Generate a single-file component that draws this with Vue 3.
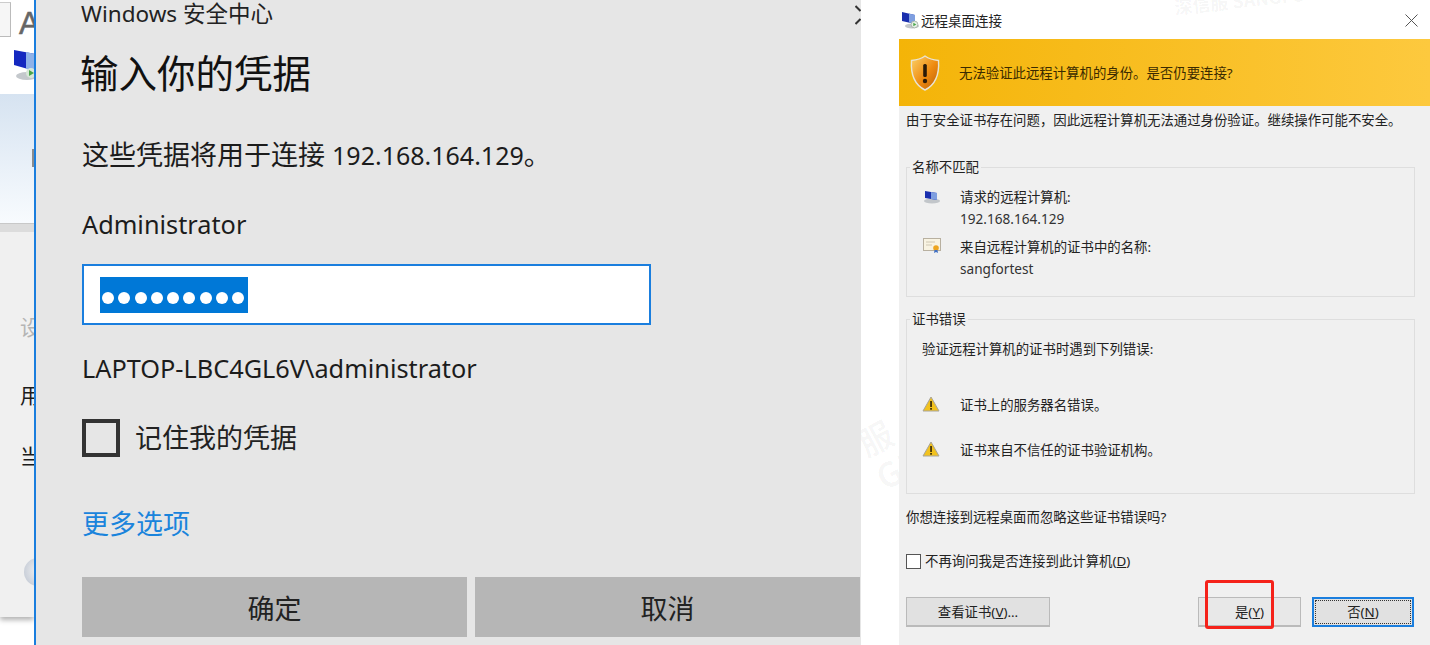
<script setup>
const mismatch = [
  { icon: 'pc', label: '请求的远程计算机:', value: '192.168.164.129' },
  { icon: 'cert', label: '来自远程计算机的证书中的名称:', value: 'sangfortest' }
]
const errors = ['证书上的服务器名错误。', '证书来自不信任的证书验证机构。']
</script>

<template>
  <div class="page">
    <aside class="strip">
      <div class="strip-tabs"><span class="tab"></span><span class="big-a">A</span></div>
      <div class="strip-head">
        <svg class="pc-big" width="26" height="34" viewBox="0 0 26 34">
          <ellipse cx="15" cy="27" rx="11" ry="4" fill="#c4c8cc" />
          <path d="M2 1l21 4v17L2 16z" fill="#1428c0" />
          <path d="M14 3l9 2v17l-9-2z" fill="#8fb2e8" />
          <circle cx="19" cy="24" r="5" fill="#d8e8d8" />
          <path d="M17 21l5 3-5 3z" fill="#4aa54a" />
        </svg>
      </div>
      <div class="strip-blue"><span class="tick"></span></div>
      <div class="strip-band"></div>
      <div class="strip-body">
        <span class="clip-t faint">设</span>
        <span class="clip-t second">用</span>
        <span class="clip-t">当</span>
        <span class="orb"></span>
      </div>
    </aside>

    <main class="cred">
      <div class="cred-top">
        <span class="cred-app">Windows 安全中心</span>
        <svg class="cred-close" width="6" height="20" viewBox="0 0 6 20"><path d="M.5 1l5 5M5.500 14l-5 5" stroke="#333" stroke-width="2" fill="none" /></svg>
      </div>
      <h1 class="cred-title">输入你的凭据</h1>
      <p class="cred-desc">这些凭据将用于连接 <span class="latin">192.168.164.129</span>。</p>
      <p class="cred-user">Administrator</p>
      <div class="cred-input"><span class="selected"><i v-for="n in 9" :key="n" class="dot"></i></span></div>
      <p class="cred-domain">LAPTOP-LBC4GL6V\administrator</p>
      <div class="cred-check"><span class="box"></span><span>记住我的凭据</span></div>
      <a class="cred-more">更多选项</a>
      <div class="cred-btns">
        <button class="cred-btn">确定</button>
        <button class="cred-btn">取消</button>
      </div>
    </main>

    <div class="spacer"><span class="wm">服<br />GFO</span></div>

    <section class="rdp">
      <header class="rdp-title">
        <span class="wm-top">深信服 SANGFOR</span>
        <svg width="18" height="18" viewBox="0 0 18 18">
          <ellipse cx="11" cy="15" rx="7" ry="2.500" fill="#c2c6ca" />
          <path d="M1 1l13 3v9L1 10z" fill="#1a2fae" />
          <path d="M8 2.600l6 1.400v9l-6-1.400z" fill="#7f9fe0" />
          <circle cx="13.500" cy="13.500" r="3.400" fill="#e6efe6" stroke="#8c9a8c" stroke-width=".6" />
          <path d="M12.300 11.800l3 1.700-3 1.700z" fill="#4aa54a" />
        </svg>
        <span class="rdp-name">远程桌面连接</span>
        <svg class="x" width="13" height="13" viewBox="0 0 13 13"><path d="M.5.5l12 12M12.500.5l-12 12" stroke="#555" fill="none" /></svg>
      </header>
      <div class="banner">
        <svg width="32" height="36" viewBox="0 0 30 36">
          <defs>
            <linearGradient id="sh" x1="0" y1="0" x2="1" y2="1">
              <stop offset="0" stop-color="#fcd36a" />
              <stop offset=".55" stop-color="#ee8a10" />
              <stop offset="1" stop-color="#b85e08" />
            </linearGradient>
          </defs>
          <path d="M15 1c3.500 2.500 8 4 13.500 4.500C29.500 20 25 30 15 35 5 30 .5 20 1.500 5.500 7 5 11.500 3.500 15 1z" fill="url(#sh)" stroke="#e9e4d4" stroke-width="1.400" />
          <rect x="13.200" y="9" width="3.600" height="13" rx="1.500" fill="#2a1a08" />
          <circle cx="15" cy="26" r="2.200" fill="#2a1a08" />
        </svg>
        <span class="banner-text">无法验证此远程计算机的身份。是否仍要连接?</span>
      </div>
      <div class="rdp-body">
        <p class="intro">由于安全证书存在问题&#xFF0C;因此远程计算机无法通过身份验证。继续操作可能不安全。</p>

        <fieldset class="group g1">
          <legend>名称不匹配</legend>
          <div v-for="m in mismatch" :key="m.label" class="row">
            <span class="row-ic">
              <svg v-if="m.icon === 'pc'" class="ic-pc" width="18" height="14" viewBox="0 0 18 14">
                <ellipse cx="9" cy="11" rx="8" ry="2.500" fill="#c2c6ca" />
                <path d="M2 1l12 2v7L2 8z" fill="#1a2fae" />
                <path d="M8 2l6 1v7l-6-1z" fill="#7f9fe0" />
              </svg>
              <svg v-else width="18" height="15" viewBox="0 0 18 15">
                <rect x=".5" y=".5" width="17" height="12" fill="#f8f3e2" stroke="#b8b0a0" />
                <path d="M3 4h9M3 7h6" stroke="#d0c8b4" />
                <circle cx="13" cy="10" r="2.800" fill="#eda520" />
                <path d="M11.500 12l-.5 3 2-1 2 1-.5-3z" fill="#3f6fc4" />
              </svg>
            </span>
            <div class="row-text"><div>{{ m.label }}</div><div class="val">{{ m.value }}</div></div>
          </div>
        </fieldset>

        <fieldset class="group g2">
          <legend>证书错误</legend>
          <p class="g2-lead">验证远程计算机的证书时遇到下列错误:</p>
          <div v-for="e in errors" :key="e" class="err">
            <svg width="18" height="16" viewBox="0 0 18 16">
              <path d="M9 1l8 14H1z" fill="#f2c21e" stroke="#a8a498" stroke-linejoin="round" />
              <rect x="8.200" y="5" width="1.700" height="6" fill="#3a2c08" />
              <rect x="8.200" y="12" width="1.700" height="1.700" fill="#3a2c08" />
            </svg>
            <span>{{ e }}</span>
          </div>
        </fieldset>

        <p class="ask">你想连接到远程桌面而忽略这些证书错误吗?</p>
        <label class="dont"><span class="dont-box"></span><span>不再询问我是否连接到此计算机(<u>D</u>)</span></label>

        <div class="actions">
          <button class="wbtn view">查看证书(<u>V</u>)...</button>
          <span class="grow"></span>
          <button class="wbtn yes">是(<u>Y</u>)<span class="redbox"></span></button>
          <button class="wbtn no"><span class="focus"></span>否(<u>N</u>)</button>
        </div>
      </div>
    </section>
  </div>
</template>

<style>
html, body { margin: 0; background: #fff; }
</style>

<style scoped>
.page {
  display: flex;
  width: 1430px;
  height: 645px;
  overflow: hidden;
  background: #fff;
  font-family: "Noto Sans", "Noto Sans CJK SC", sans-serif;
  color: #1c1c1c;
}
.strip { width: 34px; flex: none; display: flex; flex-direction: column; overflow: hidden; height: 617px; box-shadow: 0 3px 5px rgba(0,0,0,.3); background: #f0f0f0; }
.strip-tabs { height: 37px; flex: none; background: #fff; overflow: hidden; display: flex; }
.tab { width: 11px; height: 35px; flex: none; border: 1px solid #bbb; border-left: 0; border-top-color: #ccc; background: #f6f6f6; box-sizing: border-box; margin-top: 2px; }
.big-a { font: 400 31px/48px "Liberation Sans", sans-serif; color: #666; margin-left: 8px; -webkit-text-stroke: .5px #666; }
.strip-head { height: 57px; flex: none; background: #fff; overflow: hidden; padding: 12px 0 0 12px; box-sizing: border-box; }
.strip-blue { height: 129px; flex: none; position: relative; overflow: hidden; background: linear-gradient(180deg, #d6e3f1, #f8fbfe); }
.tick { position: absolute; right: 0; top: 55px; width: 2px; height: 18px; background: #8c8c8c; }
.strip-band { height: 9px; flex: none; background: #dcdcdc; border-top: 1px solid #c8c8c8; box-sizing: border-box; }
.strip-body { flex: 1; display: flex; flex-direction: column; overflow: hidden; padding-top: 82px; }
.clip-t { font-size: 21px; line-height: 26px; height: 26px; margin-left: 20px; margin-bottom: 35px; white-space: nowrap; flex: none; }
.faint { color: #b4b4b4; margin-bottom: 42px; }
.second { margin-bottom: 35px; }
.orb { width: 28px; height: 28px; flex: none; border-radius: 50%; margin: 54px 0 0 24px; background: radial-gradient(circle at 55% 45%, #f4f4f4, #c8ced8 75%, #a8b6cc); }
.pc-big { display: block; }

.cred { width: 827px; flex: none; box-sizing: border-box; border-left: 2px solid #1a7ede; background: #e6e6e6; padding: 0 0 0 46px; height: 645px; overflow: hidden; }
.cred-top { display: flex; justify-content: space-between; align-items: flex-start; height: 23px; font-size: 22.500px; line-height: 28px; color: #222; }
.cred-app { white-space: nowrap; margin-left: -1px; }
.cred-close { display: block; margin-top: 5px; flex: none; }
.cred-title { margin: 21px 0 0 -2px; font-size: 38.500px; line-height: 58px; font-weight: 400; color: #111; white-space: nowrap; }
.cred-desc { margin: 34px 0 0; font-size: 27px; line-height: 38px; white-space: nowrap; }
.latin { font-size: 25px; }
.cred-user { margin: 31px 0 0; font-size: 25.300px; line-height: 38px; white-space: nowrap; }
.cred-input { margin: 21px 0 0; width: 569px; height: 61px; box-sizing: border-box; border: 2px solid #1a7ede; background: #fff; padding: 11px 0 0 16px; }
.selected { display: flex; width: 148px; height: 36px; background: #0078d7; box-sizing: border-box; padding: 15px 0 0 2px; gap: 4.300px; }
.dot { width: 12px; height: 12px; border-radius: 50%; background: #fff; }
.cred-domain { margin: 24px 0 0; font-size: 25.300px; line-height: 38px; white-space: nowrap; }
.cred-check { margin: 32px 0 0; display: flex; align-items: center; gap: 15px; font-size: 27px; line-height: 38px; color: #222; }
.box { width: 38px; height: 38px; box-sizing: border-box; border: 4px solid #333; }
.cred-more { display: block; margin: 48px 0 0; font-size: 27px; line-height: 38px; color: #1a84dc; }
.cred-btns { display: flex; gap: 8px; margin-top: 34px; }
.cred-btn { width: 385px; height: 60px; flex: none; border: 0; background: #b6b6b6; font: 400 27px/64px "Noto Sans", "Noto Sans CJK SC", sans-serif; color: #222; padding: 0; }

.spacer { width: 38px; flex: none; position: relative; overflow: hidden; }
.wm { position: absolute; left: 4px; top: 408px; color: rgba(0,0,0,.03); font: 700 34px/38px "Noto Sans CJK SC", sans-serif; transform: rotate(-28deg); white-space: nowrap; }

.rdp { width: 531px; flex: none; display: flex; flex-direction: column; background: #f0f0f0; font-size: 13.400px; color: #222; }
.rdp-title { position: relative; overflow: hidden; height: 39px; flex: none; background: #fff; display: flex; align-items: center; box-sizing: border-box; padding: 1px 12px 0 2px; gap: 2px; }
.rdp-name { flex: 1; font-size: 13.500px; }
.wm-top { position: absolute; left: 275px; top: -12px; color: rgba(0,0,0,.05); font: 700 18px/22px "Noto Sans CJK SC", sans-serif; transform: rotate(-6deg); white-space: nowrap; }
.x { display: block; }
.banner { height: 67px; flex: none; background: linear-gradient(90deg, #f4b408, #fdc93e); display: flex; align-items: center; box-sizing: border-box; padding: 0 0 0 10px; gap: 18px; color: #3a2a00; }
.banner-text { margin-bottom: 2px; }
.rdp-body { flex: 1; padding: 0 15px 0 7px; }
.intro { margin: 4px 0 0; line-height: 20px; white-space: nowrap; }
.group { margin: 0; padding: 0; border: 1px solid #dedede; box-sizing: border-box; min-width: 0; }
.group legend { margin-left: 3px; padding: 0 2px; line-height: 18px; font-size: 13.400px; }
.g1 { margin-top: 28px; height: 139px; }
.row { display: flex; height: 49.500px; padding-left: 16px; position: relative; top: 10px; }
.row-ic { width: 37px; flex: none; padding-top: 2px; }
.ic-pc { position: relative; top: 2px; }
.row-text { line-height: 22px; }
.val { color: #333; font-size: 13.600px; }
.g2 { margin-top: 13px; height: 184px; }
.g2-lead { margin: 11px 0 35px; padding-left: 15px; line-height: 20px; }
.err { display: flex; align-items: center; height: 20px; margin-bottom: 25px; gap: 20px; padding-left: 15px; }
.ask { margin: 13px 0 0; line-height: 20px; }
.dont { display: flex; align-items: center; gap: 4px; margin-top: 24px; line-height: 20px; }
.dont-box { width: 15px; height: 15px; box-sizing: border-box; border: 1px solid #555; background: #fff; }
.actions { display: flex; align-items: flex-start; margin: 26px 1px 0 0; }
.grow { flex: 1; }
.wbtn { position: relative; height: 30px; box-sizing: border-box; border: 1px solid #bababa; border-bottom-width: 2px; background: #e1e1e1; font: 400 13.400px/26px "Noto Sans", "Noto Sans CJK SC", sans-serif; color: #222; padding: 0; text-align: center; }
.view { width: 144px; }
.yes { width: 103px; margin-right: 11px; background: #e8e8e8; }
.no { width: 102px; border: 2px solid #1a7ede; }
.focus { position: absolute; inset: 1px; border: 1px dotted #333; pointer-events: none; }
.redbox { position: absolute; left: 6px; top: -18px; width: 69px; height: 49px; border: 3px solid #f5221a; border-radius: 3px; box-sizing: border-box; }
</style>
